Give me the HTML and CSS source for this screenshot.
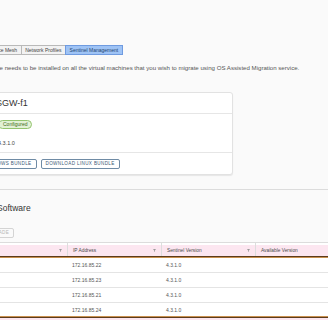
FILE: index.html
```html
<!DOCTYPE html>
<html lang="en">
<head>
  <meta charset="UTF-8" />
  <meta name="viewport" content="width=device-width,initial-scale=1.0" />
  <title>Sentinel Management</title>
  <link rel="stylesheet" href="styles.css">
</head>
<body>

  <div class="viewport">
    <div class="page">

      <!-- tabs -->
      <ul class="tabs">
        <li>Compute Profiles</li>
        <li>Service Mesh</li>
        <li>Network Profiles</li>
        <li class="active">Sentinel Management</li>
      </ul>

      <p class="intro">The Sentinel software needs to be installed on all the virtual machines that you wish to migrate using OS Assisted Migration service.</p>

      <!-- gateway card -->
      <div class="card">
        <div class="card_header">Gateway SGW-f1</div>
        <div class="card_block">
          <div class="field">
            <span class="label">Status</span>
            <span class="badge">Configured</span>
          </div>
          <div class="field">
            <span class="label">Version</span>
            <span class="value">4.3.1.0</span>
          </div>
        </div>
        <div class="card_footer">
          <button class="btn">Download Windows Bundle</button>
          <button class="btn">Download Linux Bundle</button>
        </div>
      </div>

      <!-- software list -->
      <div class="section">
        <h2>Sentinel Software</h2>
        <button class="btn btn_disabled">Upgrade</button>

        <div class="grid">
          <div class="grid_head">
            <div class="cell">Virtual Machine <svg class="filter" viewBox="0 0 4 4"><path d="M0 0h4L2.5 2v2L1.5 3.4V2z"/></svg></div>
            <div class="cell">IP Address <svg class="filter" viewBox="0 0 4 4"><path d="M0 0h4L2.5 2v2L1.5 3.4V2z"/></svg></div>
            <div class="cell">Sentinel Version <svg class="filter" viewBox="0 0 4 4"><path d="M0 0h4L2.5 2v2L1.5 3.4V2z"/></svg></div>
            <div class="cell">Available Version</div>
          </div>
          <div class="grid_body">
            <div class="row"><div class="cell">vm-1</div><div class="cell">172.16.85.22</div><div class="cell">4.3.1.0</div><div class="cell"></div></div>
            <div class="row"><div class="cell">vm-2</div><div class="cell">172.16.85.23</div><div class="cell">4.3.1.0</div><div class="cell"></div></div>
            <div class="row"><div class="cell">vm-3</div><div class="cell">172.16.85.21</div><div class="cell">4.3.1.0</div><div class="cell"></div></div>
            <div class="row"><div class="cell">vm-4</div><div class="cell">172.16.85.24</div><div class="cell">4.3.1.0</div><div class="cell"></div></div>
          </div>
          <div class="grid_foot"></div>
        </div>
      </div>

    </div>
  </div>

</body>
</html>
```

FILE: styles.css
```css
body {
  margin: 0;
  padding: 0;
  background: #fafafa;
  font-family: "Liberation Sans", Arial, sans-serif;
  color: #565656;
}

.viewport {
  width: 328px;
  height: 320px;
  overflow: hidden;
}

/* the screenshot is cropped: the page starts left of the window */
.page {
  margin-left: -60px;
  width: 420px;
  padding-top: 45px;
}

/* ========================== */
/* tabs */
/* ========================== */

.tabs {
  display: flex;
  margin: 0;
  padding: 0;
  list-style: none;
}

.tabs li {
  font-size: 5px;
  line-height: 8px;
  padding: 0 3.5px;
  border: 1px solid #b9b9b9;
  background: #f2f2f2;
  margin-right: -1px;
  color: #444;
}

.tabs li:first-child {
  padding: 0 1.5px;
}

.tabs li.active {
  background: #9ec3f5;
  border-color: #6f9be0;
  color: #23456f;
  position: relative;
}

.intro {
  margin: 9px 0 0;
  padding-left: 4px;
  font-size: 6.1px;
  line-height: 7px;
  white-space: nowrap;
}

/* ========================== */
/* card */
/* ========================== */

.card {
  margin-top: 21px;
  width: 291px;
  background: #fff;
  border: 1px solid #e2e2e2;
  border-radius: 3px;
  box-shadow: 0 1px 1px rgba(0, 0, 0, 0.08);
}

.card_header {
  padding: 0 12px 0 17px;
  font-size: 9px;
  line-height: 20px;
  color: #333;
  border-bottom: 1px solid #e6e6e6;
}

.card_block {
  padding: 6px 12px 5px;
  display: flex;
  flex-direction: column;
  gap: 9px;
  border-bottom: 1px solid #e6e6e6;
}

.field {
  display: flex;
  align-items: center;
  height: 9px;
}

.label {
  width: 45px;
  font-size: 5.5px;
}

.value {
  font-size: 5.5px;
  color: #444;
}

.badge {
  font-size: 5px;
  line-height: 7px;
  padding: 0 4px;
  border: 1px solid #93c46e;
  background: #e2f1d5;
  color: #3f6b22;
  border-radius: 5px;
}

.card_footer {
  display: flex;
  gap: 4px;
  padding: 6px 12px 5px 6px;
}

.btn {
  appearance: none;
  background: transparent;
  border: 1px solid #6f8ba5;
  border-radius: 2px;
  color: #3c5a76;
  font-family: inherit;
  font-size: 4.6px;
  letter-spacing: 0.35px;
  text-transform: uppercase;
  height: 10px;
  line-height: 8px;
  padding: 0 4px;
}

/* ========================== */
/* software list */
/* ========================== */

.section {
  margin-top: 14px;
  border-top: 1px solid #dcdcdc;
}

.section h2 {
  margin: 13px 0 0 24px;
  font-size: 8.5px;
  line-height: 10px;
  font-weight: normal;
  color: #333;
}

.btn_disabled {
  margin: 15px 0 0 39px;
  border-color: #d4d4d4;
  color: #b8b8b8;
  display: block;
}

.grid {
  margin-top: 4px;
  border-top: 1px solid #dcdcdc;
}

.grid_head,
.row {
  display: grid;
  grid-template-columns: 128px 94px 94px 1fr;
}

.grid_head {
  height: 13px;
  background: linear-gradient(#fff 2px, #fce6f0 2px);
  font-size: 4.8px;
  color: #4a4a4a;
}

.grid_head .cell {
  display: flex;
  align-items: center;
  justify-content: space-between;
  padding: 2px 5px 0 5px;
  border-right: 1px solid #ddd;
}

.grid_head .cell:last-child {
  border-right: none;
}

.filter {
  width: 3px;
  height: 3px;
  fill: #9a9a9a;
}

.grid_body {
  background: #fff;
  border-top: 1px solid #5b3b1c;
  border-bottom: 1px solid #5b3b1c;
  box-shadow: inset 0 1px 0 #c9904f, inset 0 -1px 0 #c9904f;
  padding-top: 1px;
}

.row {
  height: 14px;
  border-bottom: 1px solid #e4e4e4;
  font-size: 5px;
  color: #555;
}

.row:last-child {
  border-bottom: none;
}

.row .cell {
  display: flex;
  align-items: center;
  padding-left: 4px;
}

.row .cell:first-child {
  color: transparent;
}

.grid_foot {
  height: 20px;
  background: #fce6f0;
}
```
